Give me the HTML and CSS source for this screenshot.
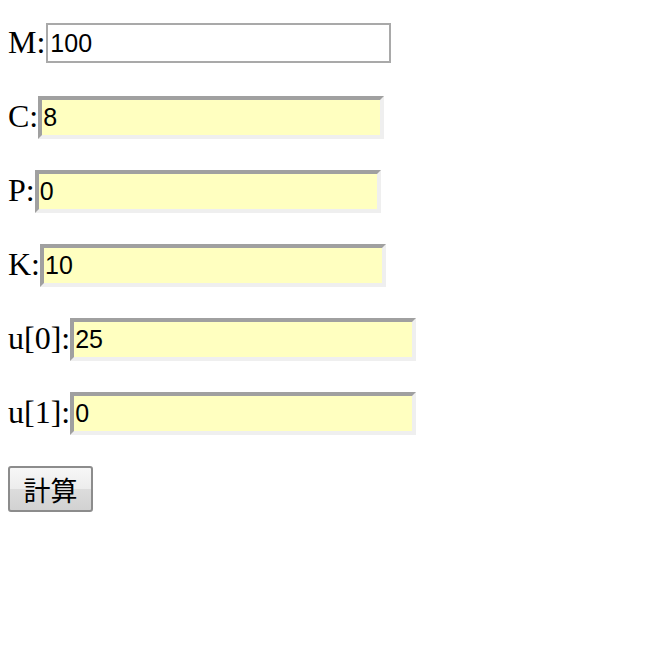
FILE: index.html
```html
<!DOCTYPE html>
<html>
<head>
<meta charset="utf-8">
<link rel="stylesheet" href="styles.css">
</head>
<body>
<form class="form">
  <div class="row"><span class="label label-m">M:</span><input class="field field-plain" type="text" value="100"></div>
  <div class="row"><span class="label">C:</span><input class="field field-hl" type="text" value="8"></div>
  <div class="row"><span class="label">P:</span><input class="field field-hl" type="text" value="0"></div>
  <div class="row"><span class="label">K:</span><input class="field field-hl" type="text" value="10"></div>
  <div class="row"><span class="label">u[0]:</span><input class="field field-hl" type="text" value="25"></div>
  <div class="row"><span class="label">u[1]:</span><input class="field field-hl" type="text" value="0"></div>
  <div class="row row-btn"><button class="btn" type="button">計算</button></div>
</form>
</body>
</html>
```
FILE: styles.css
```css
html, body {
  margin: 0;
  padding: 0;
  background: #ffffff;
}
body {
  padding: 21px 0 0 8px;
}
.form {
  display: flex;
  flex-direction: column;
  gap: 30px;
}
.row {
  display: flex;
  align-items: center;
  height: 44px;
}
.row-btn {
  height: 47px;
  align-items: flex-start;
}
.label {
  font-family: "Liberation Serif", "Times New Roman", serif;
  font-size: 32px;
  line-height: 36px;
  color: #000;
  margin-top: -2px;
}
.label-m {
  margin-right: 1px;
}
.field {
  box-sizing: border-box;
  font-family: "Liberation Sans", Arial, sans-serif;
  font-size: 25px;
  color: #000;
  margin: 0;
  outline: none;
}
.field-plain {
  width: 345px;
  height: 40px;
  border: 2px solid #a9a9a9;
  background: #fff;
  padding: 0 2px;
}
.field-hl {
  width: 346px;
  height: 43px;
  border: 4px solid;
  border-color: #a0a0a0 #efefef #efefef #a0a0a0;
  background: #ffffc0;
  padding: 0 1px;
}
.btn {
  box-sizing: border-box;
  width: 85px;
  height: 46px;
  margin-top: 1px;
  border: 2px solid #8c8c8c;
  border-radius: 3px;
  background: linear-gradient(#f7f7f7, #ececec 50%, #dcdcdc 50%, #d2d2d2);
  font-family: "Noto Sans CJK JP", "Noto Sans CJK SC", sans-serif;
  font-size: 27px;
  color: #000;
  padding: 0;
  line-height: 1;
}
```
